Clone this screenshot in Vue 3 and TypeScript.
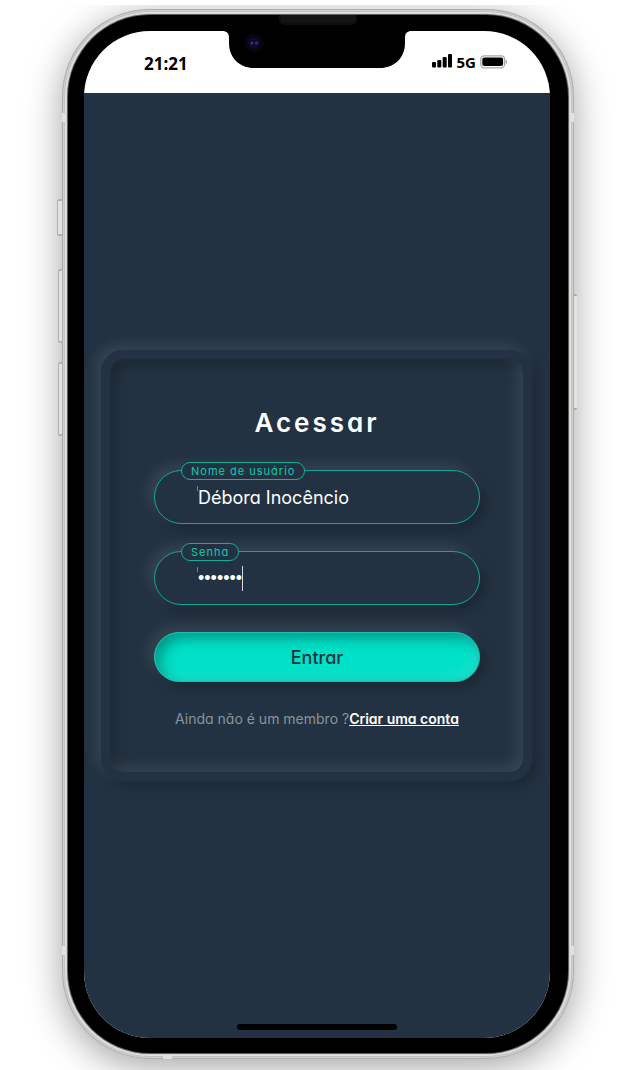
<script setup lang="ts">
import { ref } from 'vue'

const username = ref<string>('Débora Inocêncio')
const password = ref<string>('segredo')
</script>

<template>
  <div class="page">
    <div class="stage">
      <div class="phone">
        <span class="key mute"></span>
        <span class="key volume-up"></span>
        <span class="key volume-down"></span>
        <span class="key power"></span>
        <span class="band band-tl"></span>
        <span class="band band-tr"></span>
        <span class="band band-bl"></span>
        <span class="band band-br"></span>
        <span class="band band-bottom"></span>
        <div class="bezel">
          <span class="speaker"></span>
          <div class="screen">
            <header class="status">
              <span class="time">21:21</span>
              <div class="signals">
                <svg class="bars" viewBox="0 0 21 14" width="21" height="14" aria-hidden="true">
                  <rect x="0" y="8" width="4" height="5.500" rx="1" />
                  <rect x="5.300" y="6" width="4" height="7.500" rx="1" />
                  <rect x="10.700" y="3" width="4" height="10.500" rx="1" />
                  <rect x="16" y="0" width="4" height="13.500" rx="1" />
                </svg>
                <span class="network">5G</span>
                <svg class="battery" viewBox="0 0 28 14" width="28" height="14" aria-hidden="true">
                  <rect x="0.800" y="0.800" width="23.800" height="12" rx="3.500" fill="#fff" stroke="#a6a6a6" stroke-width="1.300" />
                  <rect x="2.300" y="2.500" width="20.800" height="8.600" rx="2" fill="#000" />
                  <path d="M25.700 4.500C27.600 5.200 27.600 8.400 25.700 9.200Z" fill="#a6a6a6" />
                </svg>
              </div>
              <svg class="notch" viewBox="0 0 190 38" width="190" height="38" aria-hidden="true">
                <path d="M0 0H190C185 0 183 2 183 7V12C183 27 172 37 158 37H32C18 37 7 27 7 12V7C7 2 5 0 0 0Z" fill="#000" />
                <circle cx="32" cy="12" r="10" fill="#07040a" />
                <circle cx="32" cy="12" r="6" fill="#0c0b2a" />
                <circle cx="30" cy="12" r="1.600" fill="#2c308a" />
                <circle cx="34.500" cy="12" r="1.600" fill="#2c308a" />
              </svg>
            </header>

            <main class="content">
              <form class="card" @submit.prevent>
                <h1>Acessar</h1>
                <div class="field">
                  <label for="username">Nome de usuário</label>
                  <input id="username" v-model="username" type="text" autocomplete="off" />
                  <span class="tick"></span>
                </div>
                <div class="field">
                  <label for="password">Senha</label>
                  <input id="password" v-model="password" type="password" autocomplete="off" />
                  <span class="tick"></span>
                  <span class="caret"></span>
                </div>
                <button type="submit">Entrar</button>
                <p>Ainda não é um membro ?<a href="#">Criar uma conta</a></p>
              </form>
              <span class="home"></span>
            </main>
          </div>
        </div>
      </div>
    </div>
  </div>
</template>

<style>
body {
  margin: 0;
  background: #fff;
}
</style>

<style scoped>
* {
  box-sizing: border-box;
}

.page {
  display: flex;
  min-height: 100vh;
  padding-top: 5px;
  background: #fff;
}

.stage {
  display: flex;
  flex: 1;
  overflow: hidden;
  padding: 4px 50px 11px 62px;
}

.phone {
  position: relative;
  display: flex;
  flex: 1;
  padding: 6px;
  border-radius: 88px;
  background: #dddbd8;
  box-shadow:
    inset 0 0 0 1px #b0afad,
    inset 0 0 0 2px #d2d0ce,
    inset 0 0 0 3px #c4c2c0,
    inset 0 0 1px 5px #e6e4e1,
    0 8px 36px rgba(0, 0, 0, 0.36);
}

.bezel {
  position: relative;
  display: flex;
  flex: 1;
  padding: 16px 18px 15px 16px;
  border-radius: 82px;
  background: #000;
  box-shadow: 0 0 1px 1px #55534f;
}

.speaker {
  position: absolute;
  top: 0;
  left: 50%;
  width: 78px;
  height: 10px;
  margin-left: -39px;
  border: 2px solid #0d0d0d;
  border-top-width: 0;
  border-radius: 0 0 5px 5px;
  background: #131313;
}

.screen {
  display: flex;
  flex: 1;
  flex-direction: column;
  min-width: 0;
  border-radius: 66px;
  background: #fff;
}

.status {
  position: relative;
  display: flex;
  align-items: center;
  justify-content: space-between;
  height: 62px;
  padding: 0 42px 0 60px;
  color: #000;
  font-family: "Open Sans", "Noto Sans", sans-serif;
  font-weight: 700;
}

.time {
  padding-top: 4px;
  font-size: 17px;
  line-height: 24px;
}

.signals {
  display: flex;
  align-items: center;
  gap: 4px;
}

.bars {
  margin-bottom: 2px;
}

.network {
  font-size: 15px;
  line-height: 20px;
}

.notch {
  position: absolute;
  top: 0;
  left: 50%;
  margin-left: -95px;
}

.content {
  position: relative;
  display: flex;
  flex: 1;
  align-items: center;
  padding: 0 18px 0 17px;
  border-radius: 0 0 66px 66px;
  background: #233242;
  font-family: Inter, "Open Sans", sans-serif;
  font-feature-settings: "cv11";
}

.card {
  display: flex;
  flex: 1;
  flex-direction: column;
  min-width: 0;
  padding: 43px 43px 42px 44px;
  border: 9px solid #233242;
  border-radius: 22px;
  box-shadow:
    -5px -5px 14px rgba(255, 255, 255, 0.1),
    5px 5px 14px rgba(0, 0, 0, 0.25),
    inset -5px -5px 14px rgba(255, 255, 255, 0.1),
    inset 5px 5px 14px rgba(0, 0, 0, 0.28);
}

h1 {
  margin: 0 0 26px;
  color: #fff;
  font-size: 26px;
  font-weight: 600;
  line-height: 42px;
  letter-spacing: 3px;
  text-align: center;
}

.field {
  position: relative;
  margin-bottom: 27px;
}

.field label {
  position: absolute;
  top: -8px;
  left: 27px;
  padding: 0 9px;
  border: 1px solid #12b09c;
  border-radius: 9px;
  background: #233242;
  color: #14c9b0;
  font-size: 11px;
  line-height: 16px;
  letter-spacing: 1px;
}

.field input {
  display: block;
  width: 100%;
  height: 54px;
  padding: 0 43px;
  border: 1px solid #12a898;
  border-radius: 27px;
  outline: 0;
  background: #233242;
  box-shadow:
    -5px -5px 14px rgba(255, 255, 255, 0.1),
    5px 5px 14px rgba(0, 0, 0, 0.28);
  color: #fff;
  font: inherit;
  font-size: 18px;
}

.field input[type="password"] {
  font-family: "Liberation Sans", sans-serif;
}

.tick {
  position: absolute;
  top: 16px;
  left: 43px;
  width: 1px;
  height: 5px;
  background: #12b09c;
}

.caret {
  position: absolute;
  top: 15px;
  left: 88px;
  width: 1px;
  height: 25px;
  background: #d5d8dc;
}

button {
  height: 50px;
  padding: 0;
  border: 1px solid #12c4ae;
  border-radius: 25px;
  background: #00e1c8;
  box-shadow:
    -5px -5px 14px rgba(255, 255, 255, 0.1),
    5px 5px 14px rgba(0, 0, 0, 0.28),
    inset -5px -5px 14px rgba(255, 255, 255, 0.1),
    inset 5px 5px 14px rgba(0, 0, 0, 0.35);
  color: #233242;
  font: inherit;
  font-size: 18px;
  font-weight: 500;
}

p {
  margin: 26px 0 0;
  color: #8b929b;
  font-size: 14px;
  line-height: 22px;
  text-align: center;
  white-space: nowrap;
}

a {
  color: #fff;
  font-weight: 600;
}

.home {
  position: absolute;
  bottom: 8px;
  left: 50%;
  width: 160px;
  height: 6px;
  margin-left: -80px;
  border-radius: 3px;
  background: #000;
}

.key {
  position: absolute;
  left: -4px;
  width: 4px;
  height: 74px;
  border: 1px solid #b3b1ae;
  border-width: 2px 0 2px 1px;
  border-radius: 2px 0 0 2px;
  background: #e4e2df;
}

.mute {
  top: 190px;
  left: -5px;
  width: 5px;
  height: 37px;
}

.volume-up {
  top: 260px;
}

.volume-down {
  top: 353px;
}

.power {
  top: 285px;
  right: -3px;
  left: auto;
  width: 3px;
  height: 116px;
  border-color: #aaa8a6;
  border-width: 2px 0;
  border-radius: 0 2px 2px 0;
}

.band {
  position: absolute;
  width: 5px;
  height: 9px;
  background: #e2e1df;
}

.band-tl {
  top: 104px;
  left: 0;
}

.band-tr {
  top: 104px;
  right: 0;
}

.band-bl {
  bottom: 104px;
  left: 0;
}

.band-br {
  bottom: 104px;
  right: 0;
}

.band-bottom {
  bottom: 0;
  left: 101px;
  width: 9px;
  height: 5px;
}
</style>
